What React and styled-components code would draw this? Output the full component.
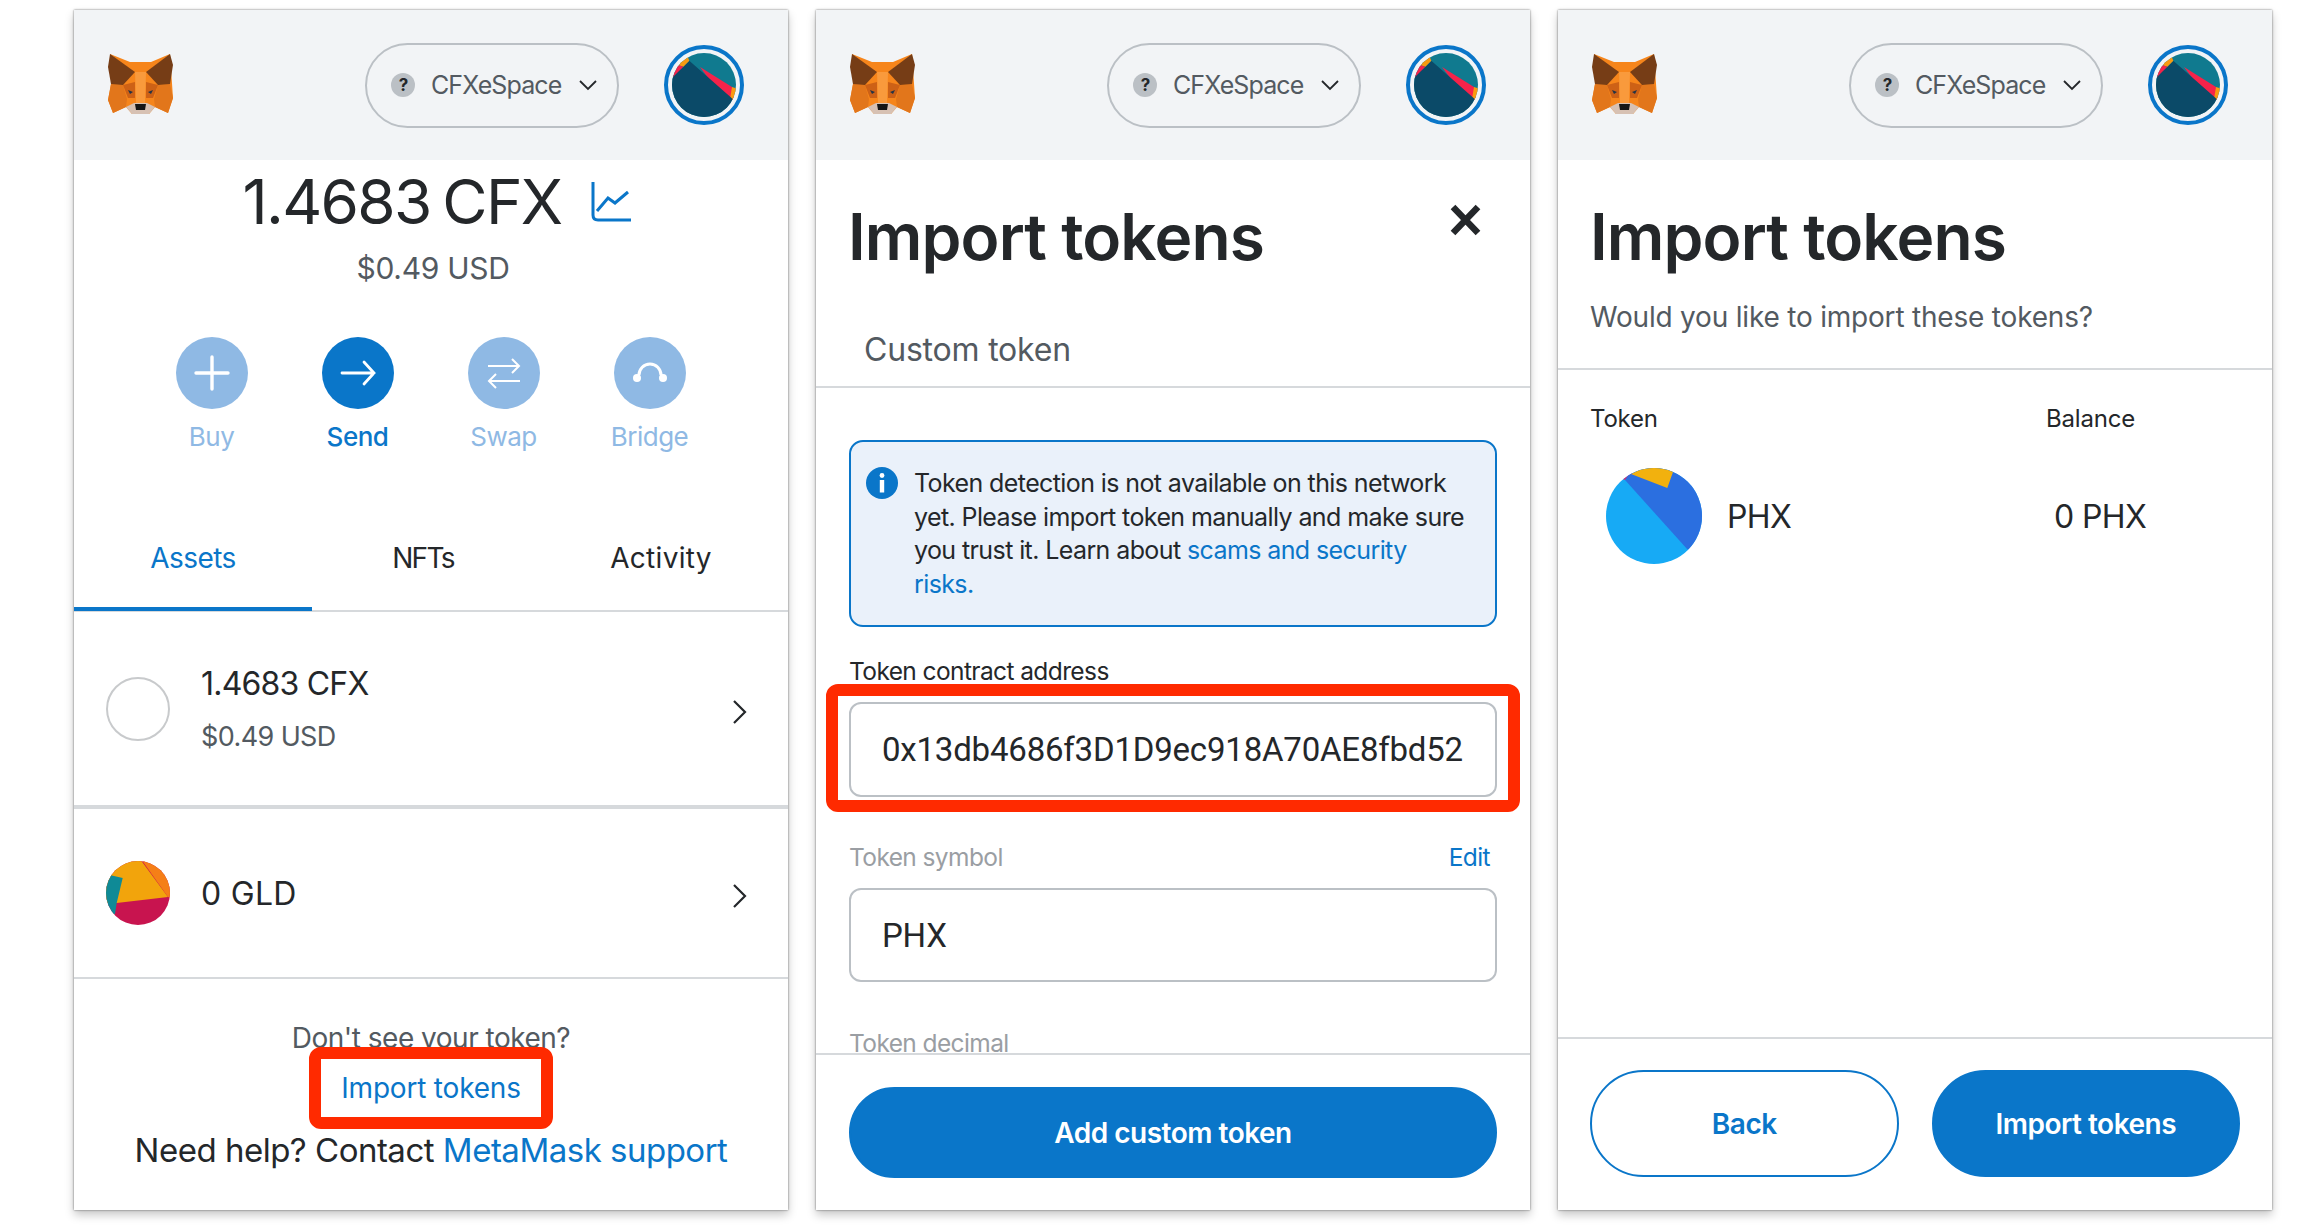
import React from "react";
import styled, { createGlobalStyle } from "styled-components";

const GlobalStyle = createGlobalStyle`
  html, body {
    margin: 0;
    padding: 0;
    background: #fff;
    font-family: "Inter", "Liberation Sans", sans-serif;
    color: #24272a;
  }
`;

const Page = styled.div`
  display: flex;
  gap: 28px;
  padding: 10px 0 0 74px;
  width: 2316px;
  height: 1228px;
  box-sizing: border-box;
  overflow: hidden;
`;

const Panel = styled.section`
  display: flex;
  flex-direction: column;
  flex: none;
  width: 714px;
  height: 1200px;
  background: #fff;
  box-shadow: 0 0 2px rgba(0, 0, 0, 0.55), 0 5px 9px rgba(0, 0, 0, 0.22);
`;

const Header = styled.header`
  display: flex;
  align-items: center;
  flex: none;
  height: 150px;
  padding: 0 44px 0 34px;
  box-sizing: border-box;
  background: #f2f4f6;
`;

const FoxLogo = styled.svg`
  width: 65px;
  height: 62px;
  flex: none;
`;

const NetworkPill = styled.div`
  display: flex;
  align-items: center;
  width: 254px;
  height: 85px;
  margin-left: auto;
  padding-left: 24px;
  box-sizing: border-box;
  border: 2px solid #bbc0c5;
  border-radius: 43px;
  color: #535a61;
  font-size: 25px;
  letter-spacing: -0.9px;
`;

const QuestionDot = styled.span`
  display: flex;
  align-items: center;
  justify-content: center;
  width: 24px;
  height: 24px;
  margin-right: 16px;
  border-radius: 50%;
  background: #bbc0c5;
  color: #24272a;
  font-size: 17px;
  font-weight: 700;
`;

const PillChevron = styled.svg`
  width: 20px;
  height: 12px;
  margin-left: 17px;
`;

const AvatarRing = styled.div`
  display: flex;
  align-items: center;
  justify-content: center;
  width: 80px;
  height: 80px;
  margin-left: 45px;
  box-sizing: border-box;
  border: 4px solid #0a76c9;
  border-radius: 50%;
  flex: none;
`;

const Blockie = styled.svg`
  display: block;
  width: ${(p) => p.$size}px;
  height: ${(p) => p.$size}px;
  flex: none;
`;

const BalanceRow = styled.div`
  display: flex;
  align-items: center;
  justify-content: center;
  height: 84px;
  padding-left: 12px;
`;

const BalanceText = styled.div`
  font-size: 62px;
  line-height: 84px;
  letter-spacing: -1.7px;
  word-spacing: -4px;
`;

const ChartIcon = styled.svg`
  width: 40px;
  height: 40px;
  margin-left: 30px;
`;

const UsdText = styled.div`
  margin-top: 4px;
  padding-left: 4px;
  text-align: center;
  color: #535a61;
  font-size: 30px;
  line-height: 40px;
  letter-spacing: -0.3px;
`;

const ActionRow = styled.div`
  display: flex;
  justify-content: center;
  margin: 49px 0 0 -1px;
`;

const Action = styled.div`
  display: flex;
  flex-direction: column;
  align-items: center;
  width: 146px;
  color: ${(p) => (p.$active ? "#0a76c9" : "#8fb9e4")};
  font-size: 26px;
  font-weight: ${(p) => (p.$active ? 500 : 400)};
  line-height: 34px;
  letter-spacing: -0.5px;
`;

const ActionCircle = styled.div`
  display: flex;
  align-items: center;
  justify-content: center;
  width: 72px;
  height: 72px;
  margin-bottom: 11px;
  border-radius: 50%;
  background: ${(p) => (p.$active ? "#0a76c9" : "#8fb9e4")};
`;

const TabBar = styled.div`
  display: grid;
  grid-template-columns: 238px 222px 1fr;
  height: 110px;
  margin-top: 48px;
  box-sizing: border-box;
  border-bottom: 2px solid #d6d9dc;
`;

const Tab = styled.div`
  display: flex;
  align-items: center;
  justify-content: center;
  height: 109px;
  padding-top: ${(p) => (p.$active ? 7 : 3)}px;
  box-sizing: border-box;
  border-bottom: ${(p) => (p.$active ? "4px solid #0a76c9" : "none")};
  color: ${(p) => (p.$active ? "#0a76c9" : "#24272a")};
  font-size: 28px;
  letter-spacing: ${(p) => p.$tracking}px;
`;

const TokenRow = styled.div`
  display: flex;
  align-items: center;
  flex: none;
  height: ${(p) => p.$height}px;
  padding: 0 41px 0 32px;
  box-sizing: content-box;
  border-bottom: ${(p) => p.$rule}px solid #d6d9dc;
`;

const EmptyIcon = styled.div`
  width: 64px;
  height: 64px;
  box-sizing: border-box;
  border: 2px solid #c8cacc;
  border-radius: 50%;
  flex: none;
`;

const TokenText = styled.div`
  flex: 1;
  margin-left: 31px;
  padding-top: 2px;
`;

const TokenAmount = styled.div`
  font-size: 32px;
  line-height: 40px;
  letter-spacing: ${(p) => p.$tracking}px;
`;

const TokenFiat = styled.div`
  margin-top: 14px;
  color: #535a61;
  font-size: 27px;
  line-height: 38px;
  letter-spacing: -0.6px;
`;

const RowChevron = styled.svg`
  width: 15px;
  height: 26px;
  margin-top: 6px;
`;

const AssetFooter = styled.div`
  display: flex;
  flex-direction: column;
  align-items: center;
  padding-top: 39px;
`;

const HintText = styled.div`
  color: #535a61;
  font-size: 28px;
  line-height: 40px;
  letter-spacing: -0.5px;
`;

const RedFrame = styled.div`
  position: relative;
  box-sizing: border-box;
  border: 12px solid #ff2a00;
  border-radius: 12px;
  background: #fff;
`;

const LinkFrame = styled(RedFrame)`
  display: flex;
  align-items: center;
  justify-content: center;
  width: 244px;
  height: 82px;
  margin-top: -11px;
`;

const Link = styled.span`
  color: #0a76c9;
`;

const HelpText = styled.div`
  margin-top: 1px;
  font-size: 33px;
  line-height: 40px;
  letter-spacing: -0.5px;
  white-space: nowrap;
`;

const ImportLink = styled(Link)`
  font-size: 28px;
  letter-spacing: -0.2px;
  white-space: nowrap;
`;

const TitleRow = styled.div`
  display: flex;
  justify-content: space-between;
  align-items: flex-start;
  padding: 37px 48px 0 32px;
`;

const Title = styled.h1`
  margin: 0;
  font-size: 64px;
  font-weight: 600;
  line-height: 80px;
  letter-spacing: -0.9px;
`;

const CloseIcon = styled.svg`
  width: 33px;
  height: 32px;
  margin-top: 7px;
`;

const CustomTab = styled.div`
  flex: none;
  padding: 0 0 16px 48px;
  margin-top: 53px;
  border-bottom: 2px solid #d6d9dc;
  color: #535a61;
  font-size: 32px;
  line-height: 40px;
  letter-spacing: -0.2px;
`;

const FormBody = styled.div`
  flex: 1;
  min-height: 0;
  overflow: hidden;
  padding: 52px 33px 0;
`;

const InfoBox = styled.div`
  display: flex;
  height: 187px;
  padding: 25px 0 0 15px;
  box-sizing: border-box;
  border: 2px solid #0a76c9;
  border-radius: 14px;
  background: #eaf1fa;
`;

const InfoIcon = styled.svg`
  width: 32px;
  height: 32px;
  flex: none;
  margin-right: 16px;
`;

const InfoText = styled.div`
  width: 554px;
  font-size: 25px;
  line-height: 33.5px;
  letter-spacing: -0.6px;
`;

const FieldLabel = styled.div`
  display: flex;
  justify-content: space-between;
  margin-top: ${(p) => p.$top}px;
  padding-right: 7px;
  color: ${(p) => (p.$muted ? "#9a9ea3" : "#24272a")};
  font-size: 24.5px;
  line-height: 30px;
  letter-spacing: -0.6px;
`;

const AddressFrame = styled(RedFrame)`
  margin: -2px -23px 0;
  padding: 6px 11px 3px;
`;

const Field = styled.div`
  display: flex;
  align-items: center;
  height: ${(p) => p.$height}px;
  margin-top: ${(p) => p.$top || 0}px;
  padding-left: 31px;
  box-sizing: border-box;
  overflow: hidden;
  border: 2px solid #bbc0c5;
  border-radius: 12px;
  background: #fff;
  font-family: "Roboto", "Liberation Sans", sans-serif;
  font-size: 33px;
  letter-spacing: -0.2px;
  white-space: nowrap;
`;

const PanelFooter = styled.div`
  display: flex;
  flex: none;
  gap: 33px;
  padding: ${(p) => (p.$wide ? "32px 33px" : "31px 32px 33px")};
  border-top: 2px solid #d6d9dc;
`;

const Button = styled.button`
  flex: 1;
  height: ${(p) => p.$height}px;
  padding: 0;
  box-sizing: border-box;
  border: 2px solid #0a76c9;
  border-radius: 54px;
  background: ${(p) => (p.$outline ? "#fff" : "#0a76c9")};
  color: ${(p) => (p.$outline ? "#0a76c9" : "#fff")};
  font-family: inherit;
  font-size: 28px;
  font-weight: 600;
  letter-spacing: -0.5px;
`;

const Intro = styled.div`
  flex: none;
  padding: 22px 0 33px 32px;
  border-bottom: 2px solid #d6d9dc;
  color: #535a61;
  font-size: 28px;
  line-height: 36px;
  letter-spacing: -0.2px;
`;

const ReviewBody = styled.div`
  display: grid;
  flex: 1;
  grid-template-columns: 456px 1fr;
  grid-template-rows: 30px 96px;
  row-gap: 34px;
  align-content: start;
  padding: 34px 0 0 32px;
`;

const ColumnLabel = styled.div`
  font-size: 24px;
  line-height: 30px;
  letter-spacing: -0.2px;
`;

const ReviewToken = styled.div`
  display: flex;
  align-items: center;
  gap: 25px;
  padding-left: 16px;
  font-size: 32px;
  letter-spacing: -0.6px;
`;

const ReviewBalance = styled.div`
  display: flex;
  align-items: center;
  padding-left: 8px;
  font-size: 32px;
  letter-spacing: -0.6px;
`;

const Fox = () => (
  <FoxLogo viewBox="0 0 65 62">
    <polygon fill="#f6851b" points="2,0 22,8 43,8 62,0 65,44 60,59 47,53 41,60 24,60 18,53 5,59 0,46 3,30" />
    <polygon fill="#e2761b" points="0,46 3,30 15,31 19,45 18,53 5,59" />
    <polygon fill="#e2761b" points="65,44 62,30 50,31 46,45 47,53 60,59" />
    <polygon fill="#f99a3c" points="27,18 38,18 37,50 28,50" />
    <polygon fill="#cd6116" points="15,31 27,28 27,44 20,44" />
    <polygon fill="#cd6116" points="50,31 38,28 38,44 45,44" />
    <polygon fill="#763d16" points="2,0 27,18 15,31 3,30 0,13" />
    <polygon fill="#763d16" points="62,0 38,18 50,31 62,30 65,11" />
    <polygon fill="#d7c1b3" points="18,53 24,60 41,60 47,53 39,49 26,49" />
    <polygon fill="#161616" points="27,50 38,50 37,56 28,56" />
    <polygon fill="#233447" points="20,36 25,38 22,40" />
    <polygon fill="#233447" points="45,36 40,38 43,40" />
  </FoxLogo>
);

// network blockie next to the account menu
const AccountAvatar = () => (
  <AvatarRing>
    <Blockie $size={64} viewBox="0 0 64 64">
      <defs>
        <clipPath id="avatarClip">
          <circle cx="32" cy="32" r="32" />
        </clipPath>
      </defs>
      <g clipPath="url(#avatarClip)">
        <rect width="64" height="64" fill="#107a8f" />
        <polygon fill="#f5234a" points="28,14 60,34 62,48 40,30" />
        <polygon fill="#f99a10" points="60,34 66,36 66,50 58,46" />
        <polygon fill="#0b4a68" points="17.3,7.7 61,46.3 66,66 -2,66 -2,25 11.3,13.7" />
        <polygon fill="#f99a10" points="17.3,7.7 11.3,13.7 6,12 8,3 15,2" />
        <polygon fill="#f5234a" points="11.3,13.7 0,25 -2,18 6,12" />
      </g>
    </Blockie>
  </AvatarRing>
);

const Topbar = () => (
  <Header>
    <Fox />
    <NetworkPill>
      <QuestionDot>?</QuestionDot>
      CFXeSpace
      <PillChevron viewBox="0 0 20 12">
        <path d="M2 2l8 8 8-8" fill="none" stroke="#24272a" strokeWidth="1.8" />
      </PillChevron>
    </NetworkPill>
    <AccountAvatar />
  </Header>
);

const GoldIcon = () => (
  <Blockie $size={64} viewBox="0 0 64 64">
    <defs>
      <clipPath id="goldClip">
        <circle cx="32" cy="32" r="32" />
      </clipPath>
    </defs>
    <g clipPath="url(#goldClip)">
      <rect width="64" height="64" fill="#c8144f" />
      <polygon fill="#f2a40c" points="-2,-2 34,-2 62,36 10.7,42 -2,42" />
      <polygon fill="#f57f17" points="35,-2 66,-2 66,37 62,36" />
      <polygon fill="#0f8a96" points="4.7,14.3 16.7,17 10.7,42 9,53 -2,53 -2,14.3" />
    </g>
  </Blockie>
);

const PhxIcon = () => (
  <Blockie $size={96} viewBox="0 0 96 96">
    <defs>
      <clipPath id="phxClip">
        <circle cx="48" cy="48" r="48" />
      </clipPath>
    </defs>
    <g clipPath="url(#phxClip)">
      <rect width="96" height="96" fill="#17aaf5" />
      <polygon fill="#e0206e" points="15,10 22,4 28,6 19,12" />
      <polygon fill="#2b6fe0" points="19,12 81.3,81.3 110,81 110,-5 30,-5" />
      <polygon fill="#f2b10e" points="25,6 40,-2 70,-2 67,4 61.3,20" />
    </g>
  </Blockie>
);

const Chevron = () => (
  <RowChevron viewBox="0 0 15 26">
    <path d="M2 2l11 11L2 24" fill="none" stroke="#24272a" strokeWidth="2.2" />
  </RowChevron>
);

const whiteLine = { fill: "none", stroke: "#fff" };

const actions = [
  { label: "Buy", icon: <path d="M18 2v32M2 18h32" {...whiteLine} strokeWidth="3.4" strokeLinecap="round" /> },
  { label: "Send", active: true, icon: <path d="M2 18h32M24 7l10 11-10 11" {...whiteLine} strokeWidth="2.8" strokeLinecap="round" /> },
  { label: "Swap", icon: <path d="M2 11h31M26 4l7 7-7 7M34 26H3M10 19l-7 7 7 7" {...whiteLine} strokeWidth="2" /> },
  {
    label: "Bridge",
    icon: (
      <>
        <path d="M7 20a11 11 0 0 1 22 0" {...whiteLine} strokeWidth="3" />
        <circle cx="5" cy="23" r="4" fill="#fff" />
        <circle cx="31" cy="23" r="4" fill="#fff" />
      </>
    ),
  },
];

const AssetsPanel = () => (
  <Panel>
    <Topbar />
    <BalanceRow>
      <BalanceText>1.4683 CFX</BalanceText>
      <ChartIcon viewBox="0 0 40 40">
        <path d="M2 0v33q0 5 5 5h33" fill="none" stroke="#0a76c9" strokeWidth="3" />
        <path d="M6 29l11-13 7 5 13-11" fill="none" stroke="#0a76c9" strokeWidth="3" />
      </ChartIcon>
    </BalanceRow>
    <UsdText>$0.49 USD</UsdText>
    <ActionRow>
      {actions.map((a) => (
        <Action key={a.label} $active={a.active}>
          <ActionCircle $active={a.active}>
            <svg width="36" height="36" viewBox="0 0 36 36">{a.icon}</svg>
          </ActionCircle>
          {a.label}
        </Action>
      ))}
    </ActionRow>
    <TabBar>
      <Tab $active $tracking={-0.6}>Assets</Tab>
      <Tab $tracking={-1.7}>NFTs</Tab>
      <Tab $tracking={0.3}>Activity</Tab>
    </TabBar>
    <TokenRow $height={193} $rule={4}>
      <EmptyIcon />
      <TokenText>
        <TokenAmount $tracking={-0.8}>1.4683 CFX</TokenAmount>
        <TokenFiat>$0.49 USD</TokenFiat>
      </TokenText>
      <Chevron />
    </TokenRow>
    <TokenRow $height={168} $rule={2}>
      <GoldIcon />
      <TokenText>
        <TokenAmount $tracking={0.3}>0 GLD</TokenAmount>
      </TokenText>
      <Chevron />
    </TokenRow>
    <AssetFooter>
      <HintText>Don't see your token?</HintText>
      <LinkFrame>
        <ImportLink>Import tokens</ImportLink>
      </LinkFrame>
      <HelpText>
        Need help? Contact <Link>MetaMask support</Link>
      </HelpText>
    </AssetFooter>
  </Panel>
);

const CustomTokenPanel = () => (
  <Panel>
    <Topbar />
    <TitleRow>
      <Title>Import tokens</Title>
      <CloseIcon viewBox="0 0 33 32">
        <path d="M4 3l25 26M29 3L4 29" fill="none" stroke="#24272a" strokeWidth="6.5" />
      </CloseIcon>
    </TitleRow>
    <CustomTab>Custom token</CustomTab>
    <FormBody>
      <InfoBox>
        <InfoIcon viewBox="0 0 32 32">
          <circle cx="16" cy="16" r="16" fill="#0a76c9" />
          <circle cx="16" cy="8.5" r="2.4" fill="#fff" />
          <rect x="13.8" y="13" width="4.4" height="12.5" fill="#fff" />
        </InfoIcon>
        <InfoText>
          Token detection is not available on this network yet. Please import token manually and make sure
          you trust it. Learn about <Link>scams and security risks.</Link>
        </InfoText>
      </InfoBox>
      <FieldLabel $top={29}>Token contract address</FieldLabel>
      <AddressFrame>
        <Field $height={95}>0x13db4686f3D1D9ec918A70AE8fbd52</Field>
      </AddressFrame>
      <FieldLabel $top={30} $muted>
        Token symbol
        <Link>Edit</Link>
      </FieldLabel>
      <Field $height={94} $top={16}>PHX</Field>
      <FieldLabel $top={46} $muted>Token decimal</FieldLabel>
    </FormBody>
    <PanelFooter $wide>
      <Button $height={91}>Add custom token</Button>
    </PanelFooter>
  </Panel>
);

const ConfirmPanel = () => (
  <Panel>
    <Topbar />
    <TitleRow>
      <Title>Import tokens</Title>
    </TitleRow>
    <Intro>Would you like to import these tokens?</Intro>
    <ReviewBody>
      <ColumnLabel>Token</ColumnLabel>
      <ColumnLabel>Balance</ColumnLabel>
      <ReviewToken>
        <PhxIcon />
        PHX
      </ReviewToken>
      <ReviewBalance>0 PHX</ReviewBalance>
    </ReviewBody>
    <PanelFooter>
      <Button $height={107} $outline>Back</Button>
      <Button $height={107}>Import tokens</Button>
    </PanelFooter>
  </Panel>
);

export default function App() {
  return (
    <>
      <GlobalStyle />
      <Page>
        <AssetsPanel />
        <CustomTokenPanel />
        <ConfirmPanel />
      </Page>
    </>
  );
}
